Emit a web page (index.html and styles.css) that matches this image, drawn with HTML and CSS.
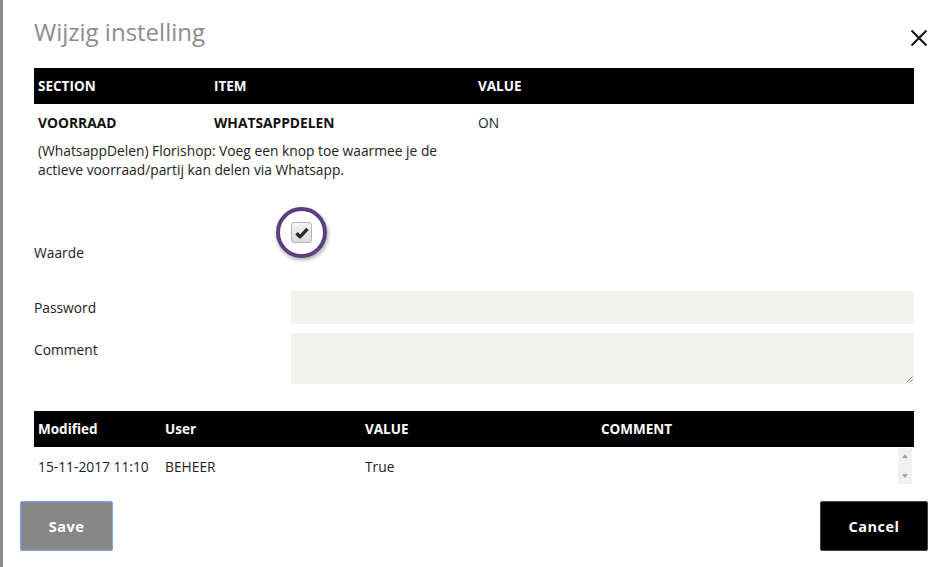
FILE: index.html
```html
<!DOCTYPE html>
<html lang="nl">
<head>
<meta charset="utf-8">
<title>Wijzig instelling</title>
<link rel="stylesheet" href="styles.css">
</head>
<body>
<div class="dialog">
  <div class="title-row">
    <h1 class="title">Wijzig instelling</h1>
    <span class="close" aria-label="Sluiten">
      <svg width="18" height="18" viewBox="0 0 18 18"><path d="M1.5 1.5 L16.5 16.5 M16.5 1.5 L1.5 16.5" stroke="#111" stroke-width="2" fill="none"/></svg>
    </span>
  </div>

  <table class="grid setting">
    <thead>
      <tr><th class="c1">SECTION</th><th class="c2">ITEM</th><th>VALUE</th></tr>
    </thead>
    <tbody>
      <tr class="main-row"><td class="strong">VOORRAAD</td><td class="strong">WHATSAPPDELEN</td><td>ON</td></tr>
      <tr><td colspan="2" class="desc">(WhatsappDelen) Florishop: Voeg een knop toe waarmee je de actieve voorraad/partij kan delen via Whatsapp.</td><td></td></tr>
    </tbody>
  </table>

  <div class="form">
    <div class="label waarde">Waarde</div>
    <div class="check-cell">
      <span class="ring"><span class="checkbox">
        <svg width="14" height="12" viewBox="0 0 14 12"><path d="M1.5 6.3 L5 9.8 L12.5 1.8" stroke="#2b2b2b" stroke-width="3.4" fill="none" stroke-linejoin="round"/></svg>
      </span></span>
    </div>
    <div class="label pw">Password</div>
    <div class="input"></div>
    <div class="label cm">Comment</div>
    <div class="textarea">
      <svg class="grip" width="8" height="8" viewBox="0 0 8 8"><path d="M7.5 1.5 L1.5 7.5 M7.5 4.5 L4.5 7.5" stroke="#888" stroke-width="1"/></svg>
    </div>
  </div>

  <div class="history">
    <table class="grid hist">
      <thead>
        <tr><th class="h1">Modified</th><th class="h2">User</th><th class="h3">VALUE</th><th>COMMENT</th></tr>
      </thead>
      <tbody>
        <tr><td>15-11-2017 11:10</td><td>BEHEER</td><td>True</td><td></td></tr>
      </tbody>
    </table>
    <div class="scrollbar"><span class="arrow up"></span><span class="arrow down"></span></div>
  </div>

  <div class="buttons">
    <button class="btn save">Save</button>
    <button class="btn cancel">Cancel</button>
  </div>
</div>
</body>
</html>
```
FILE: styles.css
```css
html, body {
  margin: 0;
  padding: 0;
  background: #fff;
}
body {
  font-family: "Open Sans", "Noto Sans", sans-serif;
  color: #222;
  font-size: 13.8px;
}
.dialog {
  box-sizing: border-box;
  width: 945px;
  height: 567px;
  border-left: 3px solid #8a8a8a;
  padding: 0 31px 0 31px;
  display: flex;
  flex-direction: column;
}
.title-row {
  display: flex;
  justify-content: space-between;
  align-items: flex-start;
  height: 68px;
  margin-right: -14px;
}
.title {
  margin: 16px 0 0 0;
  font-weight: 400;
  font-size: 24px;
  color: #8c8c8c;
  line-height: 32px;
}
.close {
  margin-top: 29px;
  display: block;
  width: 18px;
  height: 18px;
}
.grid {
  width: 880px;
  border-collapse: collapse;
  table-layout: fixed;
}
.grid th {
  background: #000;
  color: #fff;
  font-weight: 700;
  text-align: left;
  height: 36px;
  padding: 0 0 0 4px;
  font-size: 13.5px;
}
.setting .c1 { width: 172px; }
.setting .c2 { width: 260px; }
.grid td {
  padding: 0 0 0 4px;
  vertical-align: middle;
}
.main-row td { height: 37px; }
.strong { font-weight: 700; color: #111; }
.desc {
  line-height: 19px;
  padding-right: 30px !important;
  vertical-align: top !important;
}
.form {
  margin-top: 21px;
  display: grid;
  grid-template-columns: 257px 1fr;
  row-gap: 9px;
}
.label { color: #222; line-height: 19px; }
.waarde { align-self: end; margin-bottom: 20px; }
.check-cell {
  height: 68px;
  margin-bottom: 14px;
  display: flex;
  align-items: flex-start;
}
.ring {
  margin-top: 7px;
  margin-left: -15px;
  width: 51px;
  height: 51px;
  box-sizing: border-box;
  border: 4.5px solid #5b3e80;
  border-radius: 50%;
  box-shadow: 1px 2px 4px rgba(0,0,0,0.35);
  display: flex;
  align-items: center;
  justify-content: center;
}
.checkbox {
  width: 21px;
  height: 21px;
  box-sizing: border-box;
  border: 1px solid #b5b5b5;
  border-radius: 3px;
  background: linear-gradient(#f4f4f4, #dcdcdc);
  display: flex;
  align-items: center;
  justify-content: center;
}
.pw { align-self: center; }
.input {
  height: 33px;
  background: #f2f2ef;
}
.cm { padding-top: 7px; }
.textarea {
  height: 51px;
  background: #f2f2ef;
  position: relative;
}
.grip { position: absolute; right: 1px; bottom: 1px; }
.history {
  margin-top: 27px;
  position: relative;
  height: 74px;
}
.hist .h1 { width: 123px; }
.hist .h2 { width: 196px; }
.hist .h3 { width: 232px; }
.hist td { height: 38px; }
.scrollbar {
  position: absolute;
  right: 2px;
  top: 37px;
  width: 14px;
  height: 36px;
  background: #f1f1f1;
}
.arrow {
  position: absolute;
  left: 4px;
  width: 0;
  height: 0;
  border-left: 3px solid transparent;
  border-right: 3px solid transparent;
}
.arrow.up { top: 6px; border-bottom: 4px solid #a3a3a3; }
.arrow.down { bottom: 6px; border-top: 4px solid #a3a3a3; }
.buttons {
  margin-top: 16px;
  margin-left: -14px;
  margin-right: -14px;
  display: flex;
  justify-content: space-between;
}
.btn {
  height: 50px;
  font-family: "Open Sans", sans-serif;
  font-weight: 700;
  font-size: 14.5px;
  color: #fff;
  border-radius: 2px;
  letter-spacing: 0.5px;
}
.save {
  width: 93px;
  background: #878787;
  border: 1px solid #7ea6f0;
}
.cancel {
  width: 108px;
  background: #000;
  border: 1px solid #444;
}
```
